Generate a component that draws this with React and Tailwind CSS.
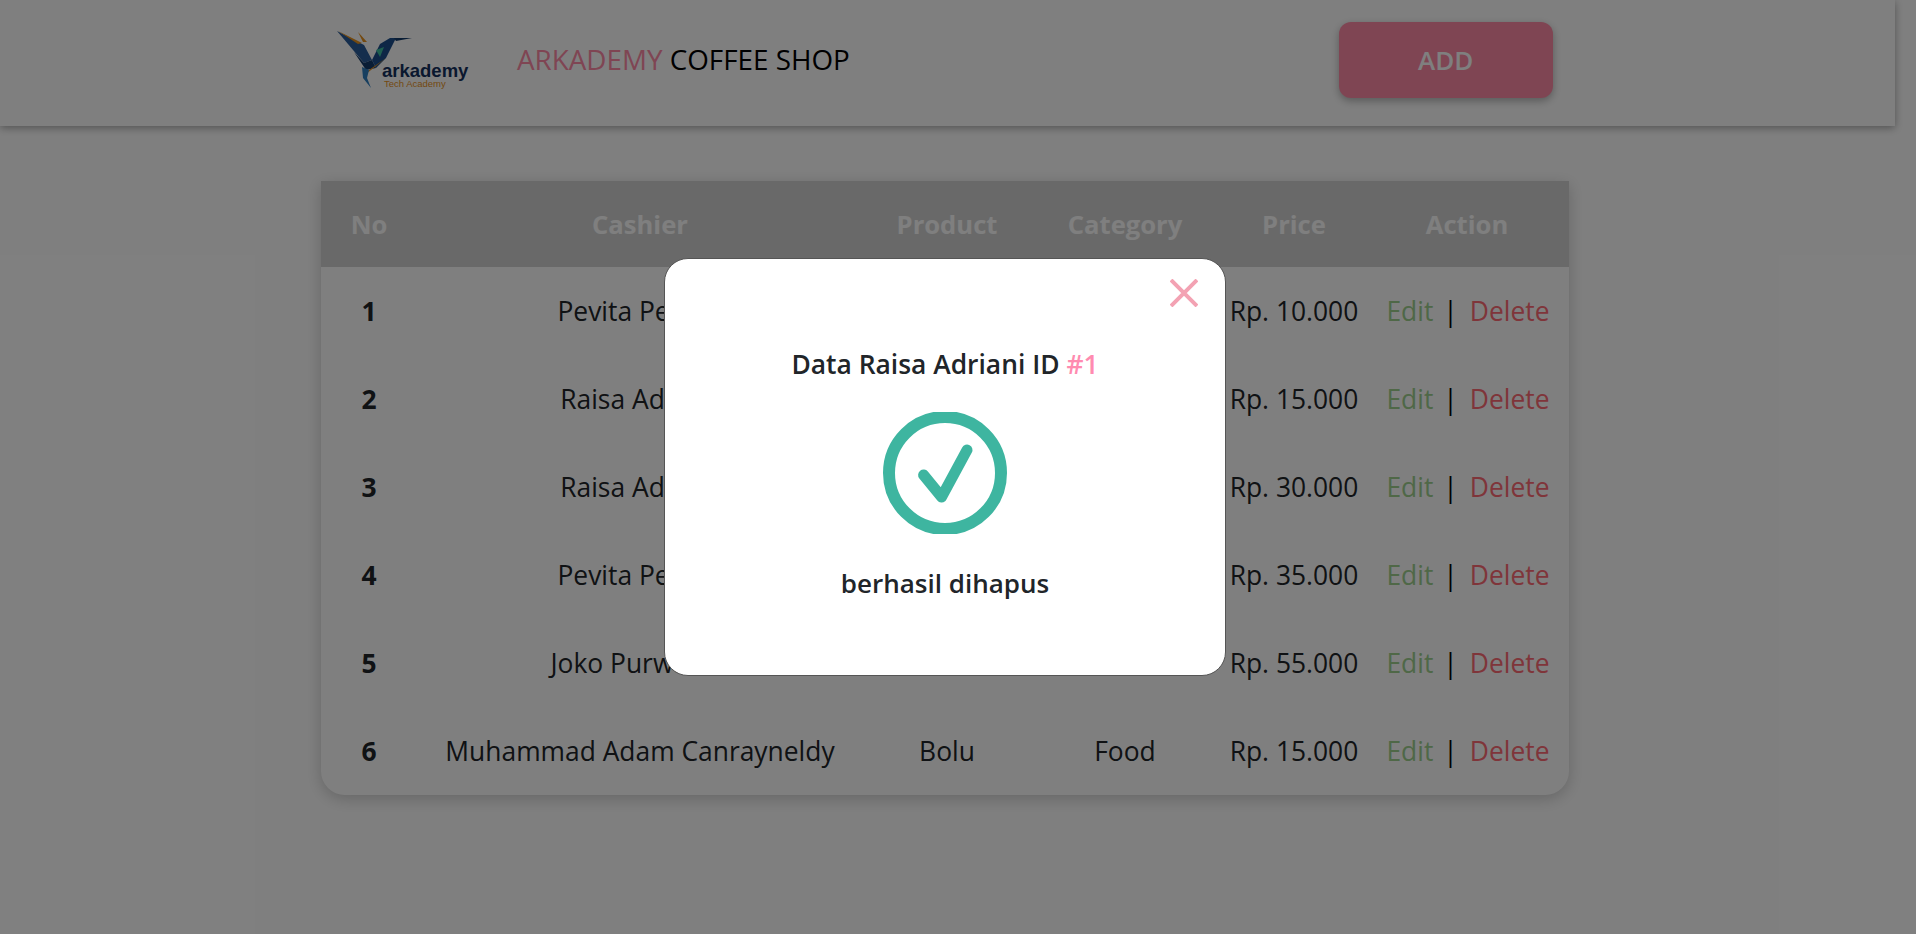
import React from 'react';

const rows = [
  { id: 1, cashier: 'Pevita Pearce', product: 'Latte', category: 'Drink', price: 'Rp. 10.000' },
  { id: 2, cashier: 'Raisa Adriani', product: 'Black Forest', category: 'Food', price: 'Rp. 15.000' },
  { id: 3, cashier: 'Raisa Adriani', product: 'Cappucino', category: 'Drink', price: 'Rp. 30.000' },
  { id: 4, cashier: 'Pevita Pearce', product: 'Espresso', category: 'Drink', price: 'Rp. 35.000' },
  { id: 5, cashier: 'Joko Purwanto', product: 'Tiramisu', category: 'Food', price: 'Rp. 55.000' },
  { id: 6, cashier: 'Muhammad Adam Canrayneldy', product: 'Bolu', category: 'Food', price: 'Rp. 15.000' },
];

function Logo() {
  return (
    <svg width="134" height="64" viewBox="0 0 134 64" className="block">
      <g transform="translate(-1 2)">
        <polygon points="1,1 28,15 36,30 28,33" fill="#2a5c9a" />
        <polygon points="2,1 26,13 22,14" fill="#e8921e" />
        <polygon points="22,2 31,12 27,12" fill="#e8921e" />
        <polygon points="18,22 28,33 36,30 40,38 30,40" fill="#123a6b" />
        <polygon points="36,30 44,14 54,8 60,8 50,28 40,38" fill="#1c4f8c" />
        <polygon points="40,20 48,17 44,27" fill="#3fc0a0" />
        <polygon points="58,8 76,8 60,11" fill="#123a6b" />
        <polygon points="50,28 33,40 30,44 40,36" fill="#e8921e" />
        <polygon points="26,37 33,40 31,48 35,58 27,48" fill="#2f7fc0" />
        <text x="46" y="47" fontFamily="Liberation Sans, sans-serif" fontWeight="700" fontSize="18.5" fill="#14315e">arkademy</text>
        <text x="48" y="57" fontFamily="Liberation Sans, sans-serif" fontSize="9.5" fill="#e8921e">Tech Academy</text>
      </g>
    </svg>
  );
}

function SuccessIcon() {
  return (
    <svg width="124" height="122" viewBox="0 0 124 122" className="block">
      <circle cx="62" cy="61" r="56" fill="none" stroke="#3eb5a0" strokeWidth="12" />
      <path d="M40.6 63 L58.6 85 L84 38" fill="none" stroke="#3eb5a0" strokeWidth="11" strokeLinecap="round" strokeLinejoin="round" />
    </svg>
  );
}

function App() {
  return (
    <div className="relative h-[934px] overflow-hidden bg-white font-['Open_Sans',sans-serif] text-[#212529]">
      <nav className="flex h-[126px] w-[1895px] items-center pb-[6px] shadow-[0_2px_8px_rgba(0,0,0,0.35)]">
        <div className="ml-[337px] w-[180px]">
          <Logo />
        </div>
        <h1 className="text-[27.8px] text-black">
          <span className="text-[#ff8ba7]">ARKADEMY</span> COFFEE SHOP
        </h1>
        <button className="ml-[489px] h-[76px] w-[214px] rounded-xl bg-[#ff8ba7] text-[26px] font-semibold text-white shadow-[0_3px_8px_rgba(0,0,0,0.3)]">
          ADD
        </button>
      </nav>

      <div className="ml-[321px] mt-[55px] w-[1248px] overflow-hidden rounded-b-3xl shadow-[0_4px_16px_rgba(0,0,0,0.2)]">
        <table className="w-full table-fixed border-collapse text-center text-[26.4px]">
          <thead>
            <tr className="h-[86px] bg-[#d3d3d3] text-[25.6px] text-white">
              <th className="w-[92px] pl-1 pt-0.5 font-bold">No</th>
              <th className="w-[454px] pt-0.5 font-bold">Cashier</th>
              <th className="w-[160px] pt-0.5 font-bold">Product</th>
              <th className="w-[196px] pt-0.5 font-bold">Category</th>
              <th className="w-[142px] pt-0.5 font-bold">Price</th>
              <th className="pt-0.5 font-bold">Action</th>
            </tr>
          </thead>
          <tbody>
            {rows.map((row) => (
              <tr key={row.id} className="h-[88px]">
                <td className="pl-1 pt-0.5 font-bold">{row.id}</td>
                <td className="pt-0.5">{row.cashier}</td>
                <td className="pt-0.5">{row.product}</td>
                <td className="pt-0.5">{row.category}</td>
                <td className="whitespace-nowrap pt-0.5">{row.price}</td>
                <td className="whitespace-nowrap pl-0.5 pt-0.5">
                  <span className="text-[#9ed08f]">Edit</span>
                  <span className="ml-2.5 mr-3 text-black">|</span>
                  <span className="text-[#ff6a74]">Delete</span>
                </td>
              </tr>
            ))}
          </tbody>
        </table>
      </div>

      <div className="absolute inset-0 flex items-center justify-center bg-black/50 pr-[26px]">
        <div className="relative flex h-[418px] w-[562px] flex-col items-center rounded-3xl border border-[#555] bg-white">
          <button className="absolute right-[27px] top-[20px]">
            <svg width="28" height="28" viewBox="0 0 28 28" className="block">
              <path d="M1 1 L27 27 M27 1 L1 27" stroke="#f3a2b3" strokeWidth="4" />
            </svg>
          </button>
          <p className="mt-[89px] text-[26.4px] font-semibold leading-8">
            Data Raisa Adriani ID <span className="text-[#ff8bb0]">#1</span>
          </p>
          <div className="mt-[32px]">
            <SuccessIcon />
          </div>
          <p className="mt-[33px] text-[26px] font-semibold leading-8">berhasil dihapus</p>
        </div>
      </div>
    </div>
  );
}

export default App;
